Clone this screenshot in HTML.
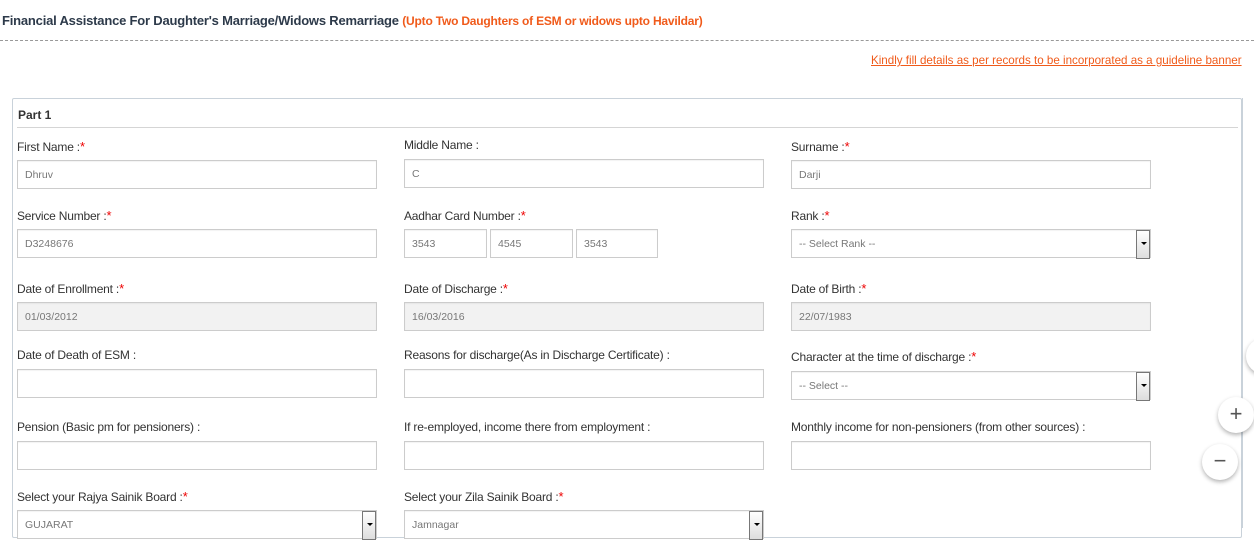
<!DOCTYPE html>
<html><head><meta charset="utf-8"><style>
*{box-sizing:border-box;margin:0;padding:0}
body{width:1254px;height:527px;overflow:hidden;background:#fff;font-family:"Liberation Sans",sans-serif;color:#333;position:relative}
.a{position:absolute;white-space:nowrap}
.t{left:2px;top:13px;font-size:13px;font-weight:bold;color:#2d3a4a;letter-spacing:-0.2px}
.t span{color:#f05a1a;font-size:12px}
.dash{left:0;top:40px;width:1254px;border-top:1px dashed #999}
.link{left:871px;top:54px;font-size:11.6px;color:#f05a1a;text-decoration:underline}
.panel{left:12px;top:98px;width:1230px;height:440px;border:1px solid #c9d2da;border-radius:2px}
.ph{left:18px;top:108px;font-size:12px;font-weight:bold;color:#333}
.hr{left:17px;top:127px;width:1221px;border-top:1px solid #d5d5d5}
.l{font-size:12px;color:#333;letter-spacing:-0.2px;margin-top:-2px}
.l b{color:#e00;font-weight:normal;font-size:13px}
.i{height:29px;border:1px solid #ccc;background:#fff;font-size:10.5px;color:#777;padding:8px 0 0 7px;box-shadow:inset 0 1px 1px rgba(0,0,0,.05)}
.g{background:#f2f2f2}
.s::after{content:"";position:absolute;right:0;top:0;width:12px;height:27px;background:linear-gradient(#fff,#ddd);border:1px solid #777}
.s::before{content:"";position:absolute;right:3px;top:12px;border-left:3px solid transparent;border-right:3px solid transparent;border-top:3px solid #000;z-index:2}
.fab{width:36px;height:36px;border-radius:50%;background:#fff;box-shadow:0 2px 4px rgba(0,0,0,.3);text-align:center;font-size:22px;line-height:34px;color:#555}
.vl{left:1242px;top:98px;height:430px;border-left:1px solid #c9d2da}
</style></head><body>
<div class="a t">Financial Assistance For Daughter's Marriage/Widows Remarriage <span>(Upto Two Daughters of ESM or widows upto Havildar)</span></div>
<div class="a dash"></div>
<div class="a link">Kindly fill details as per records to be incorporated as a guideline banner</div>
<div class="a panel"></div>
<div class="a ph">Part 1</div>
<div class="a hr"></div>

<div class="a l" style="left:17px;top:141px">First Name :<b>*</b></div>
<div class="a l" style="left:404px;top:140px">Middle Name :</div>
<div class="a l" style="left:791px;top:141px">Surname :<b>*</b></div>
<div class="a i" style="left:17px;top:160px;width:360px">Dhruv</div>
<div class="a i" style="left:404px;top:159px;width:360px">C</div>
<div class="a i" style="left:791px;top:160px;width:360px">Darji</div>

<div class="a l" style="left:17px;top:210px">Service Number :<b>*</b></div>
<div class="a l" style="left:404px;top:210px">Aadhar Card Number :<b>*</b></div>
<div class="a l" style="left:791px;top:210px">Rank :<b>*</b></div>
<div class="a i" style="left:17px;top:229px;width:360px">D3248676</div>
<div class="a i" style="left:404px;top:229px;width:83px">3543</div>
<div class="a i" style="left:490px;top:229px;width:83px">4545</div>
<div class="a i" style="left:576px;top:229px;width:82px">3543</div>
<div class="a i s" style="left:791px;top:229px;width:360px">-- Select Rank --</div>

<div class="a l" style="left:17px;top:283px">Date of Enrollment :<b>*</b></div>
<div class="a l" style="left:404px;top:283px">Date of Discharge :<b>*</b></div>
<div class="a l" style="left:791px;top:283px">Date of Birth :<b>*</b></div>
<div class="a i g" style="left:17px;top:302px;width:360px">01/03/2012</div>
<div class="a i g" style="left:404px;top:302px;width:360px">16/03/2016</div>
<div class="a i g" style="left:791px;top:302px;width:360px">22/07/1983</div>

<div class="a l" style="left:17px;top:350px">Date of Death of ESM :</div>
<div class="a l" style="left:404px;top:350px">Reasons for discharge(As in Discharge Certificate) :</div>
<div class="a l" style="left:791px;top:351px">Character at the time of discharge :<b>*</b></div>
<div class="a i" style="left:17px;top:369px;width:360px"></div>
<div class="a i" style="left:404px;top:369px;width:360px"></div>
<div class="a i s" style="left:791px;top:371px;width:360px">-- Select --</div>

<div class="a l" style="left:17px;top:422px">Pension (Basic pm for pensioners) :</div>
<div class="a l" style="left:404px;top:422px">If re-employed, income there from employment :</div>
<div class="a l" style="left:791px;top:422px">Monthly income for non-pensioners (from other sources) :</div>
<div class="a i" style="left:17px;top:441px;width:360px"></div>
<div class="a i" style="left:404px;top:441px;width:360px"></div>
<div class="a i" style="left:791px;top:441px;width:360px"></div>

<div class="a l" style="left:17px;top:491px">Select your Rajya Sainik Board :<b>*</b></div>
<div class="a l" style="left:404px;top:491px">Select your Zila Sainik Board :<b>*</b></div>
<div class="a i s" style="left:17px;top:510px;width:360px">GUJARAT</div>
<div class="a i s" style="left:404px;top:510px;width:360px">Jamnagar</div>

<div class="a vl"></div>
<div class="a fab" style="left:1218px;top:397px">+</div>
<div class="a fab" style="left:1202px;top:444px">−</div>
<div class="a fab" style="left:1246px;top:338px"></div>
</body></html>
